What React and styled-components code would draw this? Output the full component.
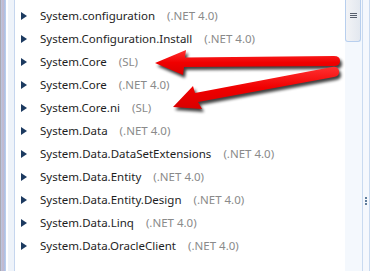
import React from 'react';
import styled, { createGlobalStyle } from 'styled-components';

const Global = createGlobalStyle`
    html, body {
        margin: 0;
        padding: 0;
        background: #ffffff;
    }
    #root {
        width: 370px;
        height: 271px;
        overflow: hidden;
    }
`

const Window = styled.div`
    position: relative;
    display: flex;
    width: 370px;
    height: 271px;
    overflow: hidden;
    background: #ffffff;
    font-family: "Noto Sans", "Open Sans", sans-serif;
`

const Gutter = styled.div`
    flex: 0 0 15px;
    background: linear-gradient(90deg,
        #a9a9b3 0px, #a9a9b3 1px,
        #b8c8e4 1px, #c7b6c9 3px, #a9c3ea 5px, #c4d6f0 6px,
        #ffffff 6px, #ffffff 8px,
        #eef3fa 8px, #eef3fa 14px,
        #c6d6ee 14px, #c6d6ee 15px);
`

const List = styled.ul`
    flex: 1;
    list-style: none;
    margin: 0;
    padding: 4px 0 0 0;
`

const Row = styled.li`
    display: flex;
    align-items: center;
    height: 23px;
    padding-left: 6px;
    font-size: 11.5px;
    color: #1e1e1e;
    white-space: nowrap;
`

const Arrow = styled.span`
    width: 0;
    height: 0;
    border-top: 4.5px solid transparent;
    border-bottom: 4.5px solid transparent;
    border-left: 6px solid #1c3a60;
    margin-right: 13px;
`

const Version = styled.span`
    color: #8a8a8a;
    margin-left: 12px;
`

const ScrollTrack = styled.div`
    flex: 0 0 17px;
    background: #f4f8fd;
    border-right: 1px solid #c9daf0;
    display: flex;
    flex-direction: column;
`

const Thumb = styled.div`
    height: 42px;
    margin: 0 1px 0 0;
    background: linear-gradient(90deg, #f2f3f6, #e3e8ef);
    border: 1px solid #b8cfee;
    border-top: none;
    border-radius: 0 0 3px 3px;
    display: flex;
    align-items: center;
    justify-content: center;
    padding-bottom: 10px;
    box-sizing: border-box;
`

const Grip = styled.div`
    width: 7px;
    height: 5px;
    background: repeating-linear-gradient(180deg, #565e6c 0, #565e6c 1px, transparent 1px, transparent 2px);
`

const Edge = styled.div`
    flex: 0 0 7px;
    background: #f5f8fd;
    border-right: 1px solid #c9daf0;
    display: flex;
    flex-direction: column;
    align-items: center;
    padding-top: 197px;
    box-sizing: border-box;
`

const Dots = styled.div`
    width: 2px;
    height: 9px;
    background: repeating-linear-gradient(180deg, #5f7d9c 0, #5f7d9c 2px, transparent 2px, transparent 3px);
`

const Overlay = styled.svg`
    position: absolute;
    left: 0;
    top: 0;
    pointer-events: none;
`

const items = [
    ['System.configuration', '(.NET 4.0)'],
    ['System.Configuration.Install', '(.NET 4.0)'],
    ['System.Core', '(SL)'],
    ['System.Core', '(.NET 4.0)'],
    ['System.Core.ni', '(SL)'],
    ['System.Data', '(.NET 4.0)'],
    ['System.Data.DataSetExtensions', '(.NET 4.0)'],
    ['System.Data.Entity', '(.NET 4.0)'],
    ['System.Data.Entity.Design', '(.NET 4.0)'],
    ['System.Data.Linq', '(.NET 4.0)'],
    ['System.Data.OracleClient', '(.NET 4.0)'],
]

const RedArrow = ({ d }) => (
    <g>
        <path d={d} fill="#000" opacity="0.75" transform="translate(2 3)" filter="url(#blur)" />
        <path d={d} fill="url(#red)" />
    </g>
)

const App = () => {
    return (
        <Window>
            <Global />
            <Gutter />
            <List>
                {items.map(([name, ver], i) => (
                    <Row key={i}>
                        <Arrow />
                        {name}
                        <Version>{ver}</Version>
                    </Row>
                ))}
            </List>
            <ScrollTrack>
                <Thumb><Grip /></Thumb>
            </ScrollTrack>
            <Edge><Dots /></Edge>
            <Overlay width="370" height="271" viewBox="0 0 370 271">
                <defs>
                    <filter id="blur" x="-10%" y="-50%" width="120%" height="200%">
                        <feGaussianBlur stdDeviation="1.5" />
                    </filter>
                    <linearGradient id="red" x1="0" y1="0" x2="0" y2="1">
                        <stop offset="0" stopColor="#ff3030" />
                        <stop offset="0.5" stopColor="#f00000" />
                        <stop offset="1" stopColor="#d80000" />
                    </linearGradient>
                </defs>
                <RedArrow d="M155 63 L186 50 L185 57.5 L334 56 Q340 56 340 61 Q340 66 334 66 L184 67 L183 75 Z" />
                <RedArrow d="M173 107 L193 86 L195 93 L332 67 Q338 66 339 71 Q340 76 334 77 L198 102 L202 109 Z" />
            </Overlay>
        </Window>
    )
}

export default App
